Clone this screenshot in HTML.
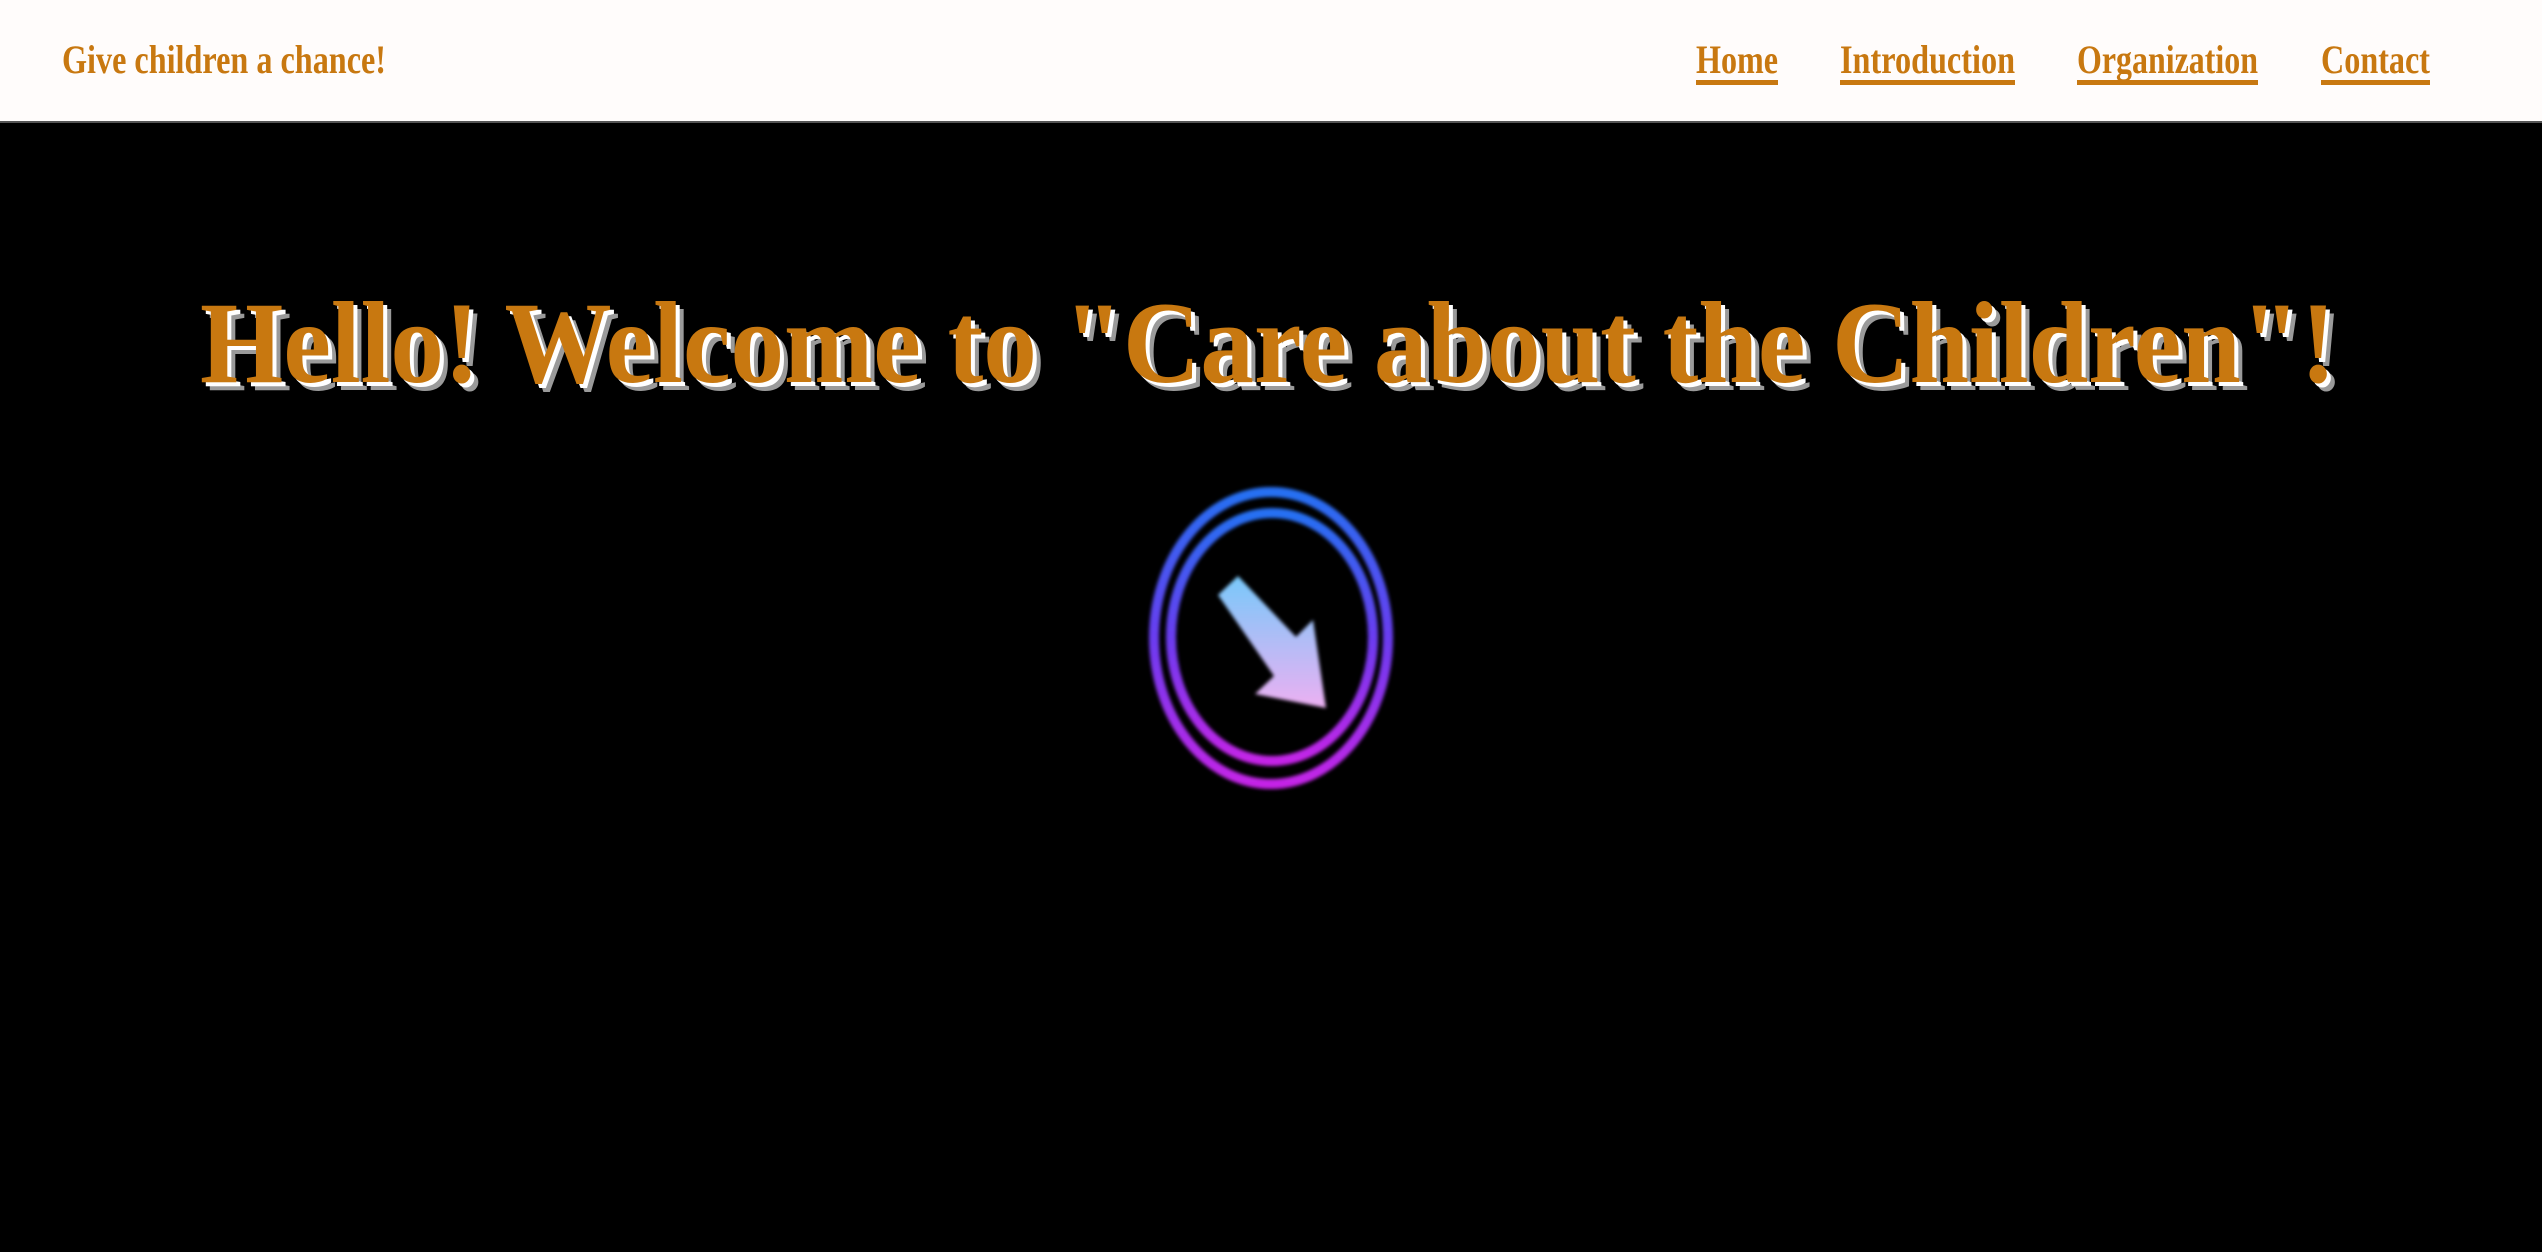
<!DOCTYPE html>
<html><head><meta charset="utf-8"><style>
html,body{margin:0;padding:0;width:2542px;height:1252px;overflow:hidden;background:#000}
svg{display:block}
</style></head><body>
<svg width="2542" height="1252" viewBox="0 0 2542 1252" xmlns="http://www.w3.org/2000/svg">
<defs>
<linearGradient id="ring" x1="0" y1="0" x2="0" y2="1"><stop offset="0" stop-color="#2570f2"/><stop offset="0.5" stop-color="#6a3cf0"/><stop offset="1" stop-color="#c424e6"/></linearGradient>
<linearGradient id="arr" x1="0" y1="0" x2="0" y2="1"><stop offset="0" stop-color="#78c8fa"/><stop offset="1" stop-color="#ecb0f2"/></linearGradient>
<filter id="bl"><feGaussianBlur stdDeviation="1.8"/></filter>
</defs>
<rect x="0" y="0" width="2542" height="121" fill="#fffcfb"/>
<rect x="0" y="121" width="2542" height="2" fill="#555"/>
<g font-family="Liberation Serif, serif" font-weight="bold" font-size="40" fill="#c87810">
<text x="62" y="73" textLength="324" lengthAdjust="spacingAndGlyphs">Give children a chance!</text>
<text x="1696" y="73" textLength="82" lengthAdjust="spacingAndGlyphs">Home</text>
<text x="1840" y="73" textLength="175" lengthAdjust="spacingAndGlyphs">Introduction</text>
<text x="2077" y="73" textLength="181" lengthAdjust="spacingAndGlyphs">Organization</text>
<text x="2321" y="73" textLength="109" lengthAdjust="spacingAndGlyphs">Contact</text>
</g>
<g fill="#c87810">
<rect x="1696" y="80" width="82" height="5"/>
<rect x="1840" y="80" width="175" height="5"/>
<rect x="2077" y="80" width="181" height="5"/>
<rect x="2321" y="80" width="109" height="5"/>
</g>
<g font-family="Liberation Serif, serif" font-weight="bold" font-size="117">
<text x="208" y="390" textLength="2136" lengthAdjust="spacingAndGlyphs" fill="#9a9a9a">Hello! Welcome to "Care about the Children"!</text>
<text x="204" y="386" textLength="2136" lengthAdjust="spacingAndGlyphs" fill="#ffffff">Hello! Welcome to "Care about the Children"!</text>
<text x="200" y="382" textLength="2136" lengthAdjust="spacingAndGlyphs" fill="#c87810">Hello! Welcome to "Care about the Children"!</text>
</g>
<g filter="url(#bl)">
<ellipse cx="1271" cy="638" rx="117" ry="146" fill="none" stroke="url(#ring)" stroke-width="10"/>
<ellipse cx="1272" cy="637" rx="101" ry="124" fill="none" stroke="url(#ring)" stroke-width="10"/>
<path d="M1218 595 L1238 576 L1296 637 L1313 620 L1326 708 L1255 694 L1274 676 Z" fill="url(#arr)"/>
</g>
</svg>
</body></html>
